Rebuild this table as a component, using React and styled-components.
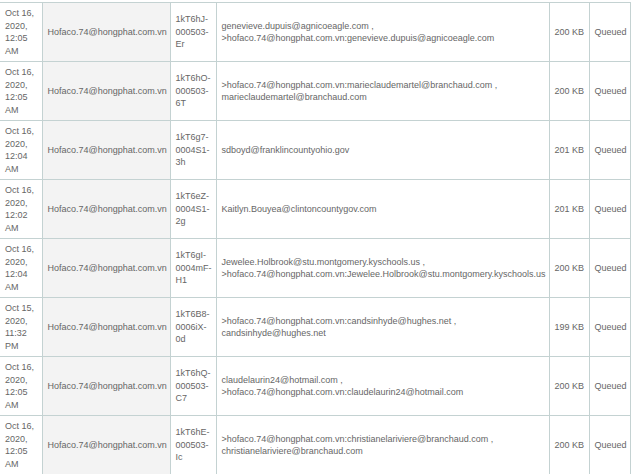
import React from "react";
import styled, { createGlobalStyle } from "styled-components";

const GlobalStyle = createGlobalStyle`
  html, body {
    margin: 0;
    padding: 0;
    background: #ffffff;
    overflow: hidden;
  }
  body {
    font-family: "Liberation Sans", Arial, sans-serif;
  }
`;

const Table = styled.table`
  border-collapse: separate;
  border-spacing: 0;
  table-layout: fixed;
  width: 631px;
  margin-top: 2px;
  font-family: "Liberation Sans", Arial, sans-serif;
  font-size: 9px;
  line-height: 12.5px;
  color: #666666;
`;

const Col = styled.col`
  width: ${(p) => p.$w}px;
`;

const Cell = styled.td`
  box-sizing: border-box;
  padding: 4px 4px 4px ${(p) => (p.$first ? 5 : 4.5)}px;
  vertical-align: middle;
  text-align: left;
  border-right: 1px solid #c4d2d2;
  border-bottom: 1px solid #c4d2d2;
  border-top: ${(p) => (p.$top ? "1px solid #c4d2d2" : "0")};
  background: ${(p) => (p.$shade ? "#f3f3f3" : "#ffffff")};
  white-space: ${(p) => (p.$nowrap ? "nowrap" : "normal")};
  overflow: hidden;
`;

const Line = styled.span`
  display: block;
  white-space: nowrap;
`;

const rows = [
  {
    date: "Oct 16, 2020, 12:05 AM",
    id: "1kT6hJ-000503-Er",
    to: ["genevieve.dupuis@agnicoeagle.com ,", ">hofaco.74@hongphat.com.vn:genevieve.dupuis@agnicoeagle.com"],
    size: "200 KB",
  },
  {
    date: "Oct 16, 2020, 12:05 AM",
    id: "1kT6hO-000503-6T",
    to: [">hofaco.74@hongphat.com.vn:marieclaudemartel@branchaud.com ,", "marieclaudemartel@branchaud.com"],
    size: "200 KB",
  },
  {
    date: "Oct 16, 2020, 12:04 AM",
    id: "1kT6g7-0004S1-3h",
    to: ["sdboyd@franklincountyohio.gov"],
    size: "201 KB",
  },
  {
    date: "Oct 16, 2020, 12:02 AM",
    id: "1kT6eZ-0004S1-2g",
    to: ["Kaitlyn.Bouyea@clintoncountygov.com"],
    size: "201 KB",
  },
  {
    date: "Oct 16, 2020, 12:04 AM",
    id: "1kT6gI-0004mF-H1",
    to: ["Jewelee.Holbrook@stu.montgomery.kyschools.us ,", ">hofaco.74@hongphat.com.vn:Jewelee.Holbrook@stu.montgomery.kyschools.us"],
    size: "200 KB",
  },
  {
    date: "Oct 15, 2020, 11:32 PM",
    id: "1kT6B8-0006iX-0d",
    to: [">hofaco.74@hongphat.com.vn:candsinhyde@hughes.net ,", "candsinhyde@hughes.net"],
    size: "199 KB",
  },
  {
    date: "Oct 16, 2020, 12:05 AM",
    id: "1kT6hQ-000503-C7",
    to: ["claudelaurin24@hotmail.com ,", ">hofaco.74@hongphat.com.vn:claudelaurin24@hotmail.com"],
    size: "200 KB",
  },
  {
    date: "Oct 16, 2020, 12:05 AM",
    id: "1kT6hE-000503-Ic",
    to: [">hofaco.74@hongphat.com.vn:christianelariviere@branchaud.com ,", "christianelariviere@branchaud.com"],
    size: "200 KB",
  },
];

export default function App() {
  return (
    <>
      <GlobalStyle />
      <Table>
        <colgroup>
          <Col $w={43} />
          <Col $w={128} />
          <Col $w={46} />
          <Col $w={333} />
          <Col $w={40} />
          <Col $w={41} />
        </colgroup>
        <tbody>
          {rows.map((r, i) => (
            <tr key={i}>
              <Cell $first $top={i === 0}>{r.date}</Cell>
              <Cell $shade $top={i === 0} $nowrap>Hofaco.74@hongphat.com.vn</Cell>
              <Cell $top={i === 0}>{r.id}</Cell>
              <Cell $top={i === 0}>
                {r.to.map((t, j) => (
                  <Line key={j}>{t}</Line>
                ))}
              </Cell>
              <Cell $top={i === 0} $nowrap>{r.size}</Cell>
              <Cell $top={i === 0} $nowrap>Queued</Cell>
            </tr>
          ))}
        </tbody>
      </Table>
    </>
  );
}
